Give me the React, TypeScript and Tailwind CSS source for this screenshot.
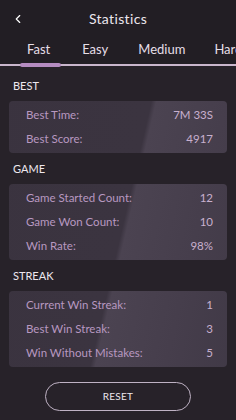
import { ChevronLeft } from "lucide-react";

const sections = [
  {
    title: "BEST",
    rows: [
      ["Best Time:", "7M 33S"],
      ["Best Score:", "4917"],
    ],
  },
  {
    title: "GAME",
    rows: [
      ["Game Started Count:", "12"],
      ["Game Won Count:", "10"],
      ["Win Rate:", "98%"],
    ],
  },
  {
    title: "STREAK",
    rows: [
      ["Current Win Streak:", "1"],
      ["Best Win Streak:", "3"],
      ["Win Without Mistakes:", "5"],
    ],
  },
];

export default function App() {
  return (
    <main
      className="w-[236px] h-[420px] overflow-hidden bg-[#272229] text-white flex flex-col"
      style={{ fontFamily: "Lato, 'Noto Sans', sans-serif" }}
    >
      <header className="bg-[#221e24]">
        <div className="relative h-[36px] flex items-center justify-center">
          <ChevronLeft className="absolute left-[11px] top-[12px] w-[14px] h-[14px] text-white" strokeWidth={2} />
          <h1 className="text-[14px] text-[#ece6ee] tracking-wide">Statistics</h1>
        </div>
        <nav className="flex h-[28px] items-center text-[13px] text-[#e6dfe8] whitespace-nowrap">
          <span className="ml-[27px]">Fast</span>
          <span className="ml-[32px]">Easy</span>
          <span className="ml-[30px]">Medium</span>
          <span className="ml-[29px]">Hard</span>
        </nav>
        <div className="relative h-[2px] bg-[#c9b6cc]">
          <div className="absolute left-[20px] top-[-1px] w-[41px] h-[4px] rounded-full bg-[#b58cc1]" />
        </div>
      </header>

      <div className="flex flex-col px-[9px]">
        {sections.map((s, i) => (
          <section key={s.title} className={i === 0 ? "mt-[12px]" : "mt-[8px]"}>
            <h2 className="px-[4px] text-[11px] text-[#eee8ef] h-[16px] leading-[16px]">{s.title}</h2>
            <div className="mt-[7px] rounded-[4px] bg-fixed bg-[linear-gradient(103deg,#3a333f_0%,#3b3440_52.5%,#4b4351_54%,#463e4c_75%,#3f3845_100%)] pl-[17px] pr-[14px] py-[2px]">
              {s.rows.map(([label, value]) => (
                <div key={label} className="flex justify-between items-center h-[24px] text-[11.5px]">
                  <span className="text-[#b898c0]">{label}</span>
                  <span className="text-[#c8b0ce]">{value}</span>
                </div>
              ))}
            </div>
          </section>
        ))}
      </div>

      <div className="flex justify-center mt-[15px]">
        <button className="w-[146px] h-[29px] rounded-full border border-[#bfb2c4] text-[10px] text-[#ece6ee] tracking-wide">
          RESET
        </button>
      </div>
    </main>
  );
}
